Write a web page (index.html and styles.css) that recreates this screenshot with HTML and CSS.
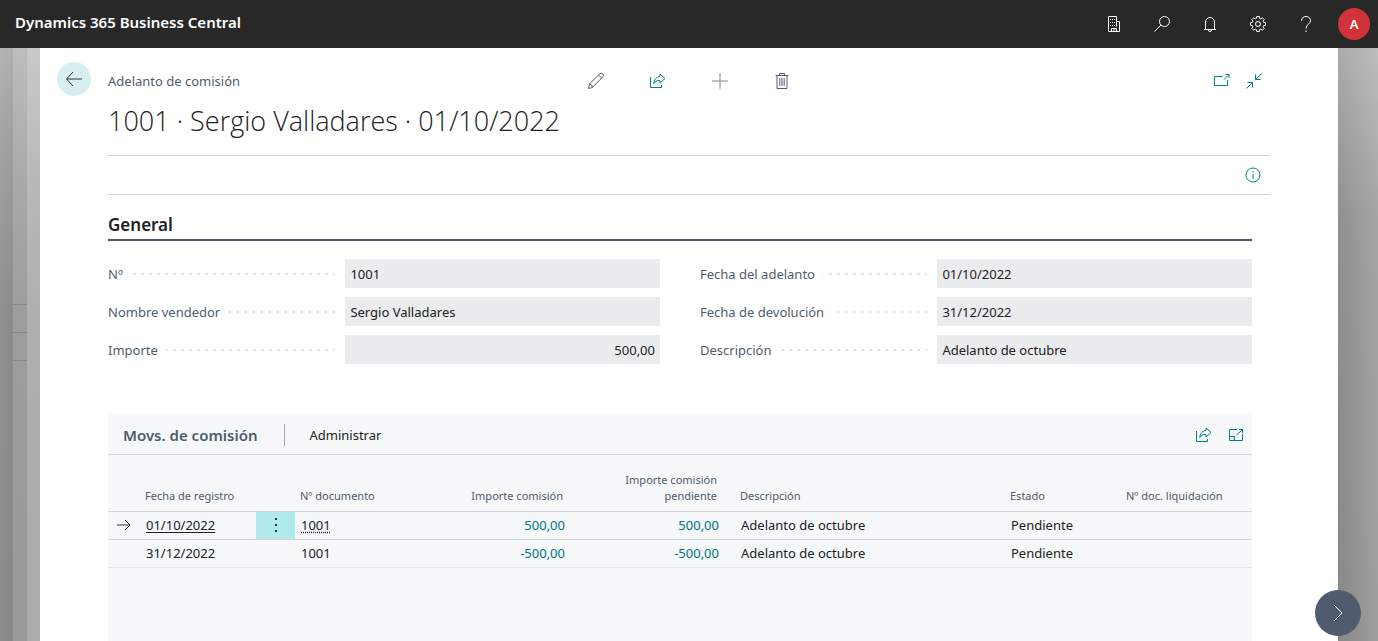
FILE: index.html
```html
<!DOCTYPE html>
<html lang="es">
<head>
<meta charset="utf-8">
<title>Dynamics 365 Business Central</title>
<link rel="stylesheet" href="styles.css">
</head>
<body>
<header class="topbar">
  <span class="brand">Dynamics 365 Business Central</span>
  <nav class="topbar-actions">
    <button class="top-btn" aria-label="Empresa"><svg width="16" height="16" viewBox="0 0 16 16"><path d="M2.5 15.500V.5h8v5h3v10zM10.500 5.500v5M5.500 15.500v-3h5v3M8 12.500v3"/><path d="M4 3.500h5M4 6.500h5M4 9.500h8" stroke-dasharray="1 1"/></svg></button>
    <button class="top-btn" aria-label="Buscar"><svg width="16" height="16" viewBox="0 0 16 16"><circle cx="10.500" cy="5.500" r="5"/><path d="M7 9 .5 15.500"/></svg></button>
    <button class="top-btn" aria-label="Notificaciones"><svg width="16" height="16" viewBox="0 0 16 16"><path d="M3.500 13.500V6a4.500 4.500 0 0 1 9 0v7.500M2 13.500h12M6.500 14a1.500 1.500 0 0 0 3 0"/></svg></button>
    <button class="top-btn" aria-label="Configuración"><svg width="16" height="16" viewBox="0 0 16 16"><path d="M6.700.5h2.600l.3 1.900 1.200.5 1.600-1.100 1.800 1.800-1.100 1.600.5 1.200 1.900.3v2.600l-1.900.3-.5 1.200 1.100 1.600-1.800 1.800-1.600-1.100-1.200.5-.3 1.900H6.700l-.3-1.900-1.200-.5-1.600 1.100-1.800-1.800 1.100-1.600-.5-1.200-1.900-.3V6.700l1.900-.3.500-1.200-1.100-1.600 1.800-1.800 1.600 1.100 1.200-.5z"/><circle cx="8" cy="8" r="2.500"/></svg></button>
    <button class="top-btn" aria-label="Ayuda"><svg width="16" height="16" viewBox="0 0 16 16"><path d="M3.500 4.800C3.500 2.200 5.400.5 8 .5s4.500 1.700 4.500 4.100c0 3.400-4.500 4-4.500 7.900M8 14.500V16"/></svg></button>
    <button class="avatar">A</button>
  </nav>
</header>
<div class="stage">
  <div class="backdrop backdrop-left"><i></i><div class="ghost-col"><b></b><b></b></div><i></i></div>
  <main class="card">
    <button class="back" aria-label="Atrás"><svg width="18" height="16" viewBox="0 0 18 16"><path d="M17 8H1.500M8 1 1.500 8 8 15"/></svg></button>
    <div class="card-head">
      <div class="head-row">
        <span class="caption">Adelanto de comisión</span>
        <div class="tools">
          <button class="icon-btn slate" aria-label="Editar"><svg width="18" height="18" viewBox="0 0 18 18"><path d="M1.500 16.500l1-4.500L13 1.500q1.500-.8 2.700.4 1.200 1.200.4 2.600L5.500 15.500zM2.500 12q2.800.5 3 3.500M11.500 3l3.200 3.200"/></svg></button>
          <button class="icon-btn" aria-label="Compartir"><svg width="16" height="16" viewBox="0 0 16 16"><path d="M.5 4v10.500h11V12"/><path d="M10 1l5 4.500-5 4.500V7.500C7 7.300 5 8.500 3.800 10.500 4 6.500 6.500 3.700 10 3.500z"/></svg></button>
          <button class="icon-btn plus" aria-label="Nuevo"><svg width="16" height="16" viewBox="0 0 16 16"><path d="M8 0v16M0 8h16"/></svg></button>
          <button class="icon-btn slate" aria-label="Eliminar"><svg width="14" height="18" viewBox="0 0 14 18"><path d="M.5 3.500h13M4.500 3.500v-2h5v2M2 3.500v13h10v-13M4.800 6v8M7 6v8M9.200 6v8"/></svg></button>
        </div>
        <div class="window-tools">
          <button class="icon-btn" aria-label="Abrir en ventana nueva"><svg width="16" height="14" viewBox="0 0 16 14"><path d="M9 2.500H.5v9h13V6M10 5.500l5-5M11.500.5H15V4"/></svg></button>
          <button class="icon-btn" aria-label="Contraer"><svg width="18" height="18" viewBox="0 0 18 18"><path d="M16.500 1.500l-6 6M10.500 2.500v5h5M1.500 16.500l6-6M2.500 10.500h5v5"/></svg></button>
        </div>
      </div>
      <h1>1001 · Sergio Valladares · 01/10/2022</h1>
      <div class="action-bar"><button class="icon-btn" aria-label="Información"><svg width="16" height="16" viewBox="0 0 16 16"><circle cx="8" cy="8" r="7"/><path d="M8 7v5M8 4v1.500"/></svg></button></div>
    </div>
    <section class="general">
      <h2>General</h2>
      <div class="fields">
        <div class="field"><label for="no">Nº</label><span class="leader"></span><input id="no" value="1001" readonly></div>
        <div class="field"><label for="fecha">Fecha del adelanto</label><span class="leader"></span><input id="fecha" value="01/10/2022" readonly></div>
        <div class="field"><label for="nombre">Nombre vendedor</label><span class="leader"></span><input id="nombre" value="Sergio Valladares" readonly></div>
        <div class="field"><label for="devol">Fecha de devolución</label><span class="leader"></span><input id="devol" value="31/12/2022" readonly></div>
        <div class="field"><label for="importe">Importe</label><span class="leader"></span><input id="importe" class="amount" value="500,00" readonly></div>
        <div class="field"><label for="desc">Descripción</label><span class="leader"></span><input id="desc" value="Adelanto de octubre" readonly></div>
      </div>
    </section>
    <section class="part">
      <div class="part-head">
        <h3>Movs. de comisión</h3>
        <button class="menu">Administrar</button>
        <div class="part-tools">
          <button class="icon-btn" aria-label="Compartir lista"><svg width="16" height="16" viewBox="0 0 16 16"><path d="M.5 4v10.500h11V12"/><path d="M10 1l5 4.500-5 4.500V7.500C7 7.300 5 8.500 3.800 10.500 4 6.500 6.500 3.700 10 3.500z"/></svg></button>
          <button class="icon-btn" aria-label="Ampliar lista"><svg width="16" height="14" viewBox="0 0 16 14"><path d="M9 1.500H1.500v11h13V6M1.500 8.500h5v4M8.500 7l6-5.500M11 1.500h3.500V5"/></svg></button>
        </div>
      </div>
      <table>
        <colgroup><col class="c-mark"><col class="c-date"><col class="c-more"><col class="c-doc"><col class="c-amt"><col class="c-pend"><col><col class="c-state"><col class="c-liq"></colgroup>
        <thead><tr><th></th><th>Fecha de registro</th><th></th><th>Nº documento</th><th class="num">Importe comisión</th><th class="num pending">Importe comisión pendiente</th><th>Descripción</th><th>Estado</th><th>Nº doc. liquidación</th></tr></thead>
        <tbody>
          <tr class="current"><td class="mark"><svg width="14" height="12" viewBox="0 0 14 12"><path d="M0 6h13M8 1l5 5-5 5"/></svg></td><td><a href="#">01/10/2022</a></td><td class="more"><button aria-label="Más opciones"><svg width="4" height="16" viewBox="0 0 4 16"><path d="M1 1h2v2H1zM1 7h2v2H1zM1 13h2v2H1z"/></svg></button></td><td><span class="lookup">1001</span></td><td class="num">500,00</td><td class="num pending">500,00</td><td>Adelanto de octubre</td><td>Pendiente</td><td></td></tr>
          <tr><td></td><td>31/12/2022</td><td></td><td>1001</td><td class="num">-500,00</td><td class="num pending">-500,00</td><td>Adelanto de octubre</td><td>Pendiente</td><td></td></tr>
        </tbody>
      </table>
    </section>
    <button class="next" aria-label="Siguiente"><svg width="10" height="18" viewBox="0 0 10 18"><path d="M1 1l8 8-8 8"/></svg></button>
  </main>
  <div class="backdrop backdrop-right"></div>
</div>
</body>
</html>
```
FILE: styles.css
```css
* { box-sizing: border-box; }
body {
  margin: 0;
  height: 100vh;
  display: flex;
  flex-direction: column;
  overflow: hidden;
  font: 13px/20px "Noto Sans", "Open Sans", sans-serif;
  color: #212121;
}
button { border: 0; padding: 0; background: none; font: inherit; color: inherit; display: flex; align-items: center; justify-content: center; }
svg { fill: none; stroke: currentColor; stroke-width: 1; display: block; }
h1, h2, h3 { margin: 0; }

.topbar {
  flex: none;
  height: 48px;
  padding: 0 8px 0 15px;
  display: flex;
  align-items: center;
  justify-content: space-between;
  background: #282828;
  color: #fff;
}
.brand { font-size: 15px; font-weight: 600; padding-bottom: 5px; }
.topbar-actions { display: flex; align-items: center; }
.top-btn { width: 48px; height: 48px; }
.avatar { width: 32px; height: 32px; margin-left: 8px; border-radius: 50%; background: #d13438; font-weight: 600; }

.stage { flex: 1; min-height: 0; display: flex; }
.backdrop { flex: none; width: 40px; }
.backdrop-left { display: flex; background: linear-gradient(#b4b4b4, #a0a0a0 20%, #909090 45%, #8c8c8c); }
.backdrop-left > i { width: 13px; background: linear-gradient(90deg, rgba(0,0,0,0), rgba(0,0,0,.03)); }
.backdrop-left > i:last-child { background: rgba(255,255,255,.28); }
.ghost-col { width: 14px; padding-top: 256px; background: rgba(255,255,255,.12); }
.ghost-col b { display: block; height: 28px; border-top: 1px solid #868686; }
.ghost-col b:last-child { height: 29px; border-bottom: 1px solid #868686; }
.backdrop-right { background: linear-gradient(90deg, rgba(0,0,0,.03), rgba(255,255,255,.16)), linear-gradient(#b0b0b0, #939393 30%, #8c8c8c); }

.card { position: relative; flex: 1; min-width: 0; display: flex; flex-direction: column; padding: 0 68px; background: #fff; }
.back { position: absolute; left: 17px; top: 14px; width: 34px; height: 34px; border-radius: 50%; background: #d8eff1; color: #333; }
.card-head { padding-top: 20px; }
.head-row { display: grid; grid-template-columns: 1fr auto 1fr; align-items: center; height: 26px; }
.caption, label, th { color: #505c6d; }
.tools { display: flex; gap: 38px; }
.window-tools { display: flex; gap: 8px; justify-content: flex-end; padding-right: 4px; }
.icon-btn { width: 24px; height: 24px; color: #008089; }
.slate { color: #505c6d; }
.plus { color: #848a96; }
h1 { font: 300 27px/40px "Open Sans", "Noto Sans", sans-serif; padding: 7px 0 14px; }
.action-bar { height: 40px; border: solid #d2d4d8; border-width: 1px 0; display: flex; align-items: center; justify-content: flex-end; padding-right: 5px; }

.general { padding: 17px 18px 0 0; }
h2 { font-size: 17px; line-height: 26px; font-weight: 600; padding-bottom: 1px; border-bottom: 2px solid #505c6d; }
.fields { display: grid; grid-template-columns: 1fr 1fr; gap: 9px 40px; padding-top: 18px; }
.field { display: flex; align-items: center; height: 29px; }
.leader { flex: 1; height: 2px; margin: 0 10px 0 8px; background: linear-gradient(90deg, transparent 6px, #d6d8dc 6px) right / 8px 2px repeat-x; }
input { width: 57%; height: 29px; border: 0; padding: 0 5px; background: #ebecee; font: inherit; color: inherit; outline: 0; }
.amount { text-align: right; }

.part { flex: 1; margin: 51px 18px 0 0; background: #f5f7f9; }
.part-head { display: flex; align-items: center; height: 40px; padding: 0 4px 0 15px; border-bottom: 1px solid #d2d4d8; }
h3 { font-size: 15px; font-weight: 600; color: #505c6d; padding-right: 26px; }
.menu { height: 22px; padding-left: 25px; border-left: 1px solid #a0a8b4; }
.part-tools { display: flex; gap: 8px; margin-left: auto; }

table { width: 100%; table-layout: fixed; border-collapse: collapse; }
th { height: 56px; padding: 0 8px 7px 5px; font-size: 11px; line-height: 16px; font-weight: 400; text-align: left; vertical-align: bottom; border-bottom: 1px solid #d2d4d8; }
td { height: 28px; padding: 0 6px; border-bottom: 1px solid #e2e4e8; white-space: nowrap; }
.current td { border-bottom-color: #d2d4d8; }
.num { text-align: right; }
td.num { color: #007680; }
td.pending { padding-right: 16px; }
th.pending { padding-left: 48px; padding-right: 18px; }
.c-mark { width: 32px; }
.c-date { width: 116px; }
.c-more { width: 39px; }
.c-doc { width: 126px; }
.c-amt { width: 150px; }
.c-pend { width: 164px; }
.c-state { width: 116px; }
.c-liq { width: 131px; }
td.mark { padding: 0 0 0 9px; color: #333; }
td.more { padding: 0; background: #b1eaec; }
.more button { width: 100%; height: 27px; }
.more path { fill: #333; stroke: none; }
td a { color: inherit; text-underline-offset: 2px; }
.lookup { text-decoration: underline dotted; text-underline-offset: 2px; }

.next { position: absolute; right: -23px; bottom: 5px; width: 46px; height: 46px; z-index: 1; border-radius: 50%; background: #505c6d; color: #fff; }
```
